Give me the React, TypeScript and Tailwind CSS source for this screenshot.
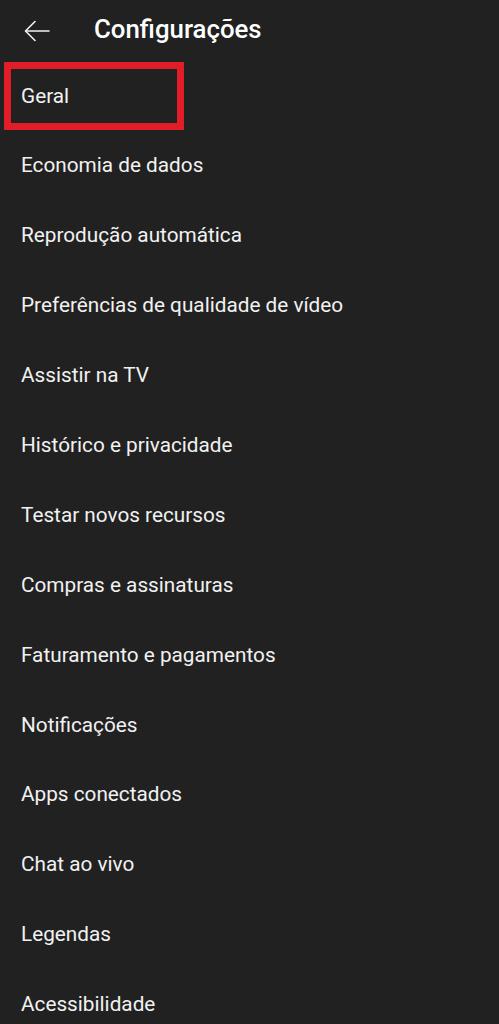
import React from 'react';

const items = [
  'Geral',
  'Economia de dados',
  'Reprodução automática',
  'Preferências de qualidade de vídeo',
  'Assistir na TV',
  'Histórico e privacidade',
  'Testar novos recursos',
  'Compras e assinaturas',
  'Faturamento e pagamentos',
  'Notificações',
  'Apps conectados',
  'Chat ao vivo',
  'Legendas',
  'Acessibilidade',
];

function BackArrow() {
  return (
    <svg width="26" height="24" viewBox="0 0 26 24" fill="none" stroke="#f1f1f1" strokeWidth="1.6" strokeLinecap="round" strokeLinejoin="round">
      <path d="M25 12H2" />
      <path d="M11 2.5L1.5 12L11 21.5" />
    </svg>
  );
}

export default function App() {
  return (
    <div className="w-[499px] h-[1024px] overflow-hidden bg-[#212121] text-[#f1f1f1]" style={{ fontFamily: 'Roboto, "Noto Sans", sans-serif' }}>
      {/* Header */}
      <div className="h-[60px] flex items-center">
        <div className="w-[94px] pl-6 pt-[2px] flex items-center">
          <BackArrow />
        </div>
        <h1 className="text-[25.8px] font-medium text-white leading-none">Configurações</h1>
      </div>

      {/* Settings list */}
      <ul className="pt-px">
        {items.map((label, i) => (
          <li key={label} className="relative h-[69.9px] flex items-center pl-[21px]">
            <span className="text-[20.75px] leading-none">{label}</span>
            {i === 0 && (
              <div className="absolute left-1 top-px w-[180px] h-[68px] border-[7px] border-[#e11d27]" />
            )}
          </li>
        ))}
      </ul>
    </div>
  );
}
